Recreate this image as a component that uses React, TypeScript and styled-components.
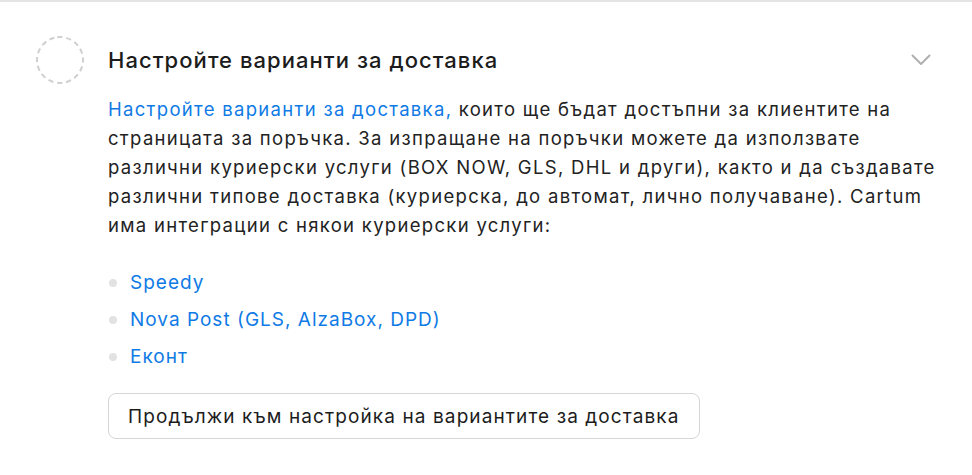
import React from 'react';
import styled, { createGlobalStyle } from 'styled-components';

const GlobalStyle = createGlobalStyle`
  html, body {
    margin: 0;
    padding: 0;
    background: #ffffff;
  }
  body {
    font-family: Inter, "Noto Sans", "Liberation Sans", sans-serif;
    color: #1f1f1f;
  }
`;

const couriers = [
  { name: 'Speedy' },
  { name: 'Nova Post (GLS, AlzaBox, DPD)' },
  { name: 'Еконт' },
];

export default function App() {
  return (
    <>
      <GlobalStyle />
      <Card>
        <StepMark>
          <svg width="48" height="48" viewBox="0 0 48 48">
            <circle
              cx="24"
              cy="24"
              r="23"
              fill="none"
              stroke="#d0d0d0"
              strokeWidth="2"
              strokeDasharray="5.2 3.83"
              transform="rotate(-97 24 24)"
            />
          </svg>
        </StepMark>
        <Body>
          <Header>
            <Title>Настройте варианти за доставка</Title>
            <Toggle aria-label="Свий">
              <svg width="20" height="12" viewBox="0 0 20 12">
                <path
                  d="M1.5 1.5 L10 10 L18.5 1.5"
                  fill="none"
                  stroke="#b0b0b0"
                  strokeWidth="2"
                  strokeLinecap="round"
                  strokeLinejoin="round"
                />
              </svg>
            </Toggle>
          </Header>
          <Text>
            <Link href="#">Настройте варианти за доставка,</Link> които ще бъдат
            достъпни за клиентите на страницата за поръчка. За изпращане на
            поръчки можете да използвате различни куриерски услуги (BOX NOW,
            GLS, DHL и други), както и да създавате различни типове доставка
            (куриерска, до автомат, лично получаване). Cartum има интеграции с
            някои куриерски услуги:
          </Text>
          <List>
            {couriers.map((c) => (
              <Item key={c.name}>
                <Link href="#">{c.name}</Link>
              </Item>
            ))}
          </List>
          <div>
            <Button type="button">
              Продължи към настройка на вариантите за доставка
            </Button>
          </div>
        </Body>
      </Card>
    </>
  );
}

const Card = styled.section`
  display: flex;
  gap: 24px;
  padding: 34px 36px 36px 36px;
  border-top: 2px solid #e4e4e4;
  min-height: 475px;
  box-sizing: border-box;
`;

const StepMark = styled.div`
  flex: 0 0 48px;
  height: 48px;
  svg {
    display: block;
  }
`;

const Body = styled.div`
  flex: 1;
  min-width: 0;
`;

const Header = styled.div`
  display: flex;
  align-items: center;
  justify-content: space-between;
  height: 48px;
`;

const Title = styled.h2`
  margin: 0;
  font-size: 22px;
  font-weight: 500;
  color: #1c1c1c;
  letter-spacing: 1.05px;
`;

const Toggle = styled.button`
  display: flex;
  align-items: center;
  justify-content: center;
  padding: 0;
  margin-right: 5px;
  width: 20px;
  height: 20px;
  border: none;
  background: none;
  cursor: pointer;
`;

const Text = styled.p`
  margin: 11px -4px 0 0;
  font-size: 18.5px;
  line-height: 29px;
  letter-spacing: 1.3px;
  color: #222222;
`;

const Link = styled.a`
  color: #0f7ae5;
  text-decoration: none;
`;

const List = styled.ul`
  list-style: none;
  margin: 28px 0 0;
  padding: 0;
  display: flex;
  flex-direction: column;
  gap: 8px;
`;

const Item = styled.li`
  display: flex;
  align-items: center;
  gap: 13px;
  font-size: 19px;
  line-height: 29px;
  letter-spacing: 1px;
  &::before {
    content: '';
    flex: 0 0 8px;
    height: 8px;
    margin-left: 1px;
    border-radius: 50%;
    background: #e2e2e2;
  }
`;

const Button = styled.button`
  margin-top: 22px;
  height: 46px;
  padding: 0 19px;
  border: 1px solid #d6d6d6;
  border-radius: 8px;
  background: #ffffff;
  font-family: inherit;
  font-size: 19px;
  letter-spacing: 1.1px;
  color: #1c1c1c;
  cursor: pointer;

  &:hover {
    background: #f6f6f6;
  }
`;
